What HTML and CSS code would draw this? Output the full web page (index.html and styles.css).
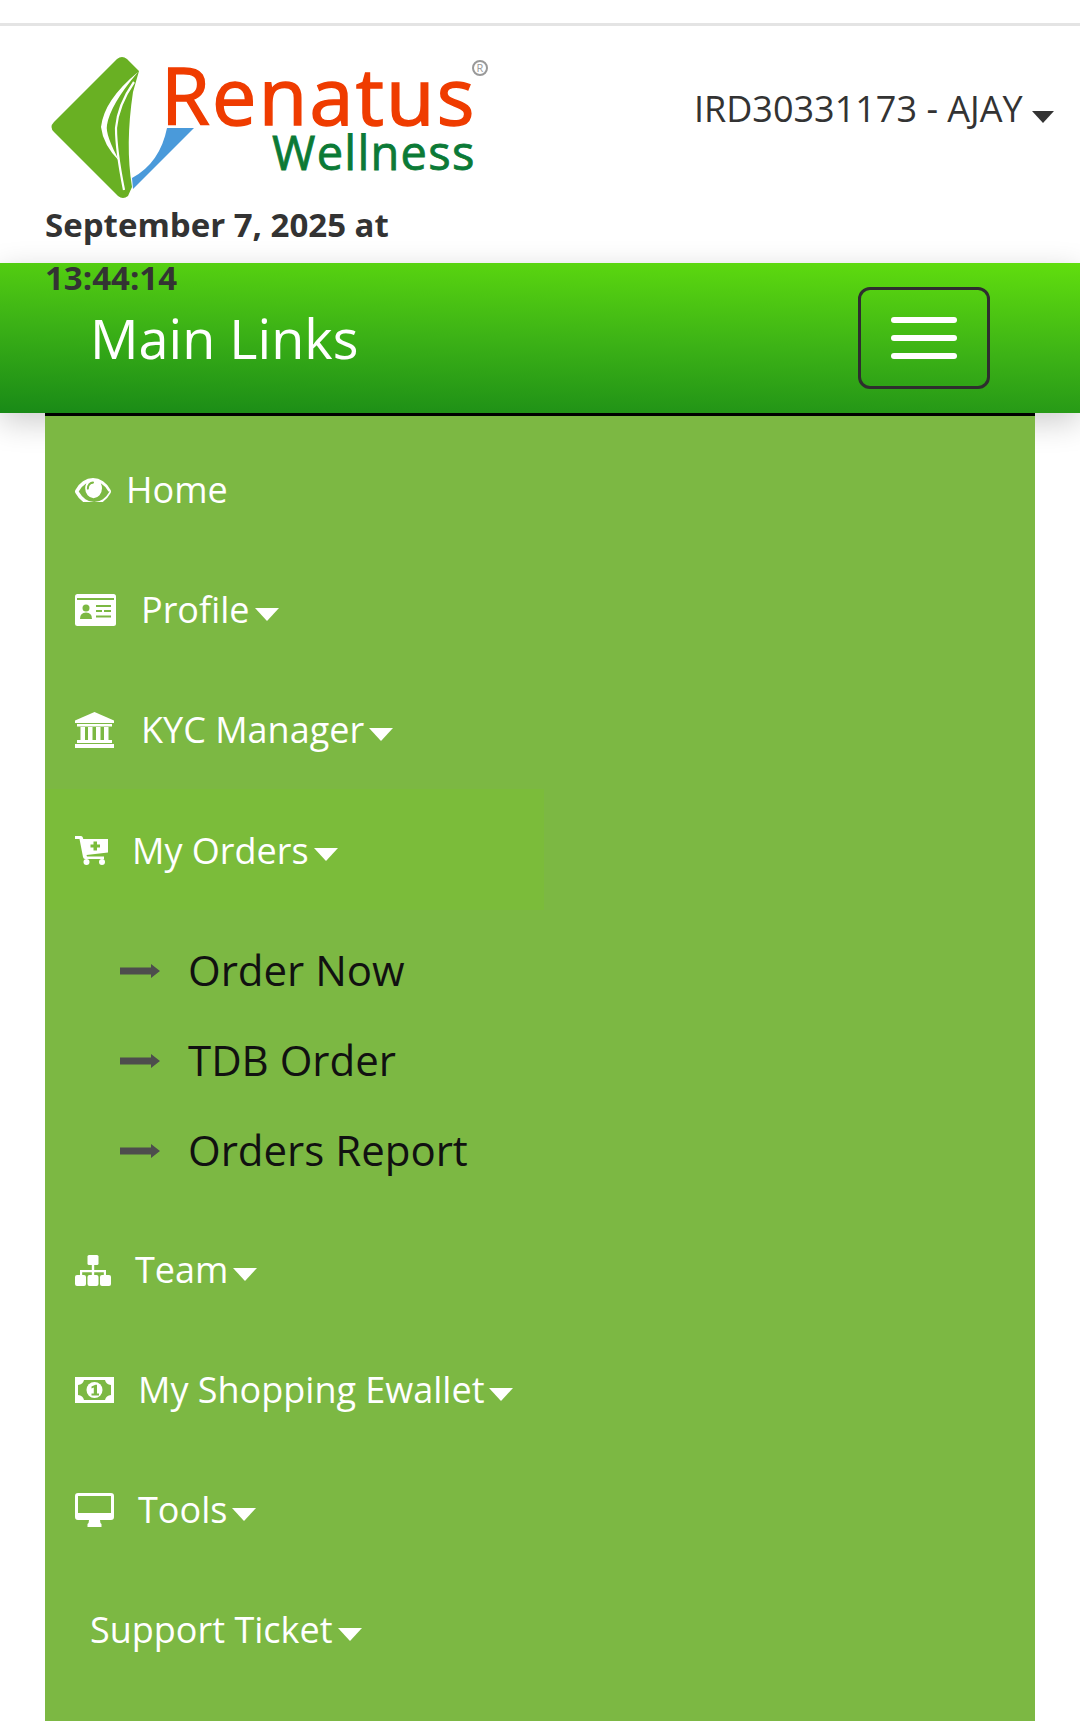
FILE: index.html
```html
<!DOCTYPE html>
<html lang="en">
<head>
<meta charset="utf-8">
<title>Renatus Wellness</title>
<link rel="stylesheet" href="styles.css">
</head>
<body>
<div class="topbar"></div>
<header class="header">
  <div class="brand">
    <svg class="logo" viewBox="45 53 445 150" aria-label="Renatus Wellness">
      <path class="leaf" d="M139 71 L127 59 Q122 55 117 59 L54 122 Q49 127 54 132 L118 196 Q123 200 128 196 L132 187 Q125 145 133 92 Z"/>
      <path class="cut" d="M138 72 Q104 100 101 127 Q103 145 120 162 Q105 135 107 125 Q110 105 138 72 Z"/>
      <path class="cut-line" d="M134 82 Q118 105 116 128 Q116 150 124 190"/>
      <path class="sea" d="M167 128 H194 L133 189 L132 178 Q160 163 167 128 Z"/>
      <text class="logo-r" x="161" y="125">Renatus</text>
      <text class="logo-w" x="272" y="170">Wellness</text>
      <circle class="reg" cx="480" cy="68" r="7"/>
      <text class="reg-t" x="480" y="72">R</text>
    </svg>
    <p class="date">September 7, 2025 at 13:44:14</p>
  </div>
  <div class="user">IRD30331173 - AJAY <span class="caret caret-dark"></span></div>
</header>
<nav class="navbar">
  <span class="nav-title">Main Links</span>
  <button class="toggle" type="button" aria-label="Toggle"><i></i><i></i><i></i></button>
</nav>
<main class="panel">
  <ul class="menu">
    <li><a class="item">
      <svg class="ico ico-eye" viewBox="0 384 1792 1024" preserveAspectRatio="none"><path d="M1664 960q-152-236-381-353 61 104 61 217 0 173-123 296t-296 123-296-123-123-296q0-113 61-217-229 117-381 353 133 205 333.5 326.500t434.500 121.500 434.500-121.500 333.500-326.500zm-720-384q0-20-14-34t-34-14q-125 0-214.500 89.500t-89.500 214.500q0 20 14 34t34 14 34-14 14-34q0-86 61-147t147-61q20 0 34-14t14-34zm848 384q0 34-20 69-140 230-376.500 368.500t-499.500 138.500-499.500-139-376.500-368q-20-35-20-69t20-69q140-229 376.500-368t499.500-139 499.500 139 376.500 368q20 35 20 69z"/></svg>
      <span>Home</span></a></li>
    <li><a class="item">
      <svg class="ico ico-card" viewBox="0 0 41 32"><rect width="41" height="32" rx="2.500"/><g class="hole"><rect x="2" y="4" width="37" height="2"/><circle cx="11" cy="14" r="3.500"/><path d="M5 25 Q5 18.500 11 18.500 Q17 18.500 17 25 Z"/><rect x="21" y="11" width="15" height="2"/><path d="M21 16 H27 V18 H21 Z M29 16 H36 V18 H29 Z"/><rect x="21" y="21.500" width="15" height="2"/></g></svg>
      <span>Profile</span><span class="caret"></span></a></li>
    <li><a class="item">
      <svg class="ico ico-bank" viewBox="0 0 39 36"><path d="M19.500 0 L39 8.500 V11 H0 V8.500 Z"/><rect x="2" y="12" width="35" height="2.500"/><rect x="5.500" y="15" width="4.500" height="13"/><rect x="13" y="15" width="4.500" height="13"/><rect x="21" y="15" width="4.500" height="13"/><rect x="29" y="15" width="4.500" height="13"/><rect x="2" y="28" width="35" height="3"/><rect y="32" width="39" height="4"/></svg>
      <span>KYC Manager</span><span class="caret"></span></a></li>
    <li><a class="item active">
      <svg class="ico ico-cart" viewBox="0 0 33 29"><path d="M0 0 H6 Q7.500 0 7.800 1.500 L8.300 3 H33 V16.500 L11.500 19 L12 20.500 H29 V23 H10 Q8.500 23 8 21 L4.500 3 H0 Z"/><circle cx="11.500" cy="26" r="3"/><circle cx="27" cy="26" r="3"/><path class="hole" d="M18.500 5.500 H22 V8.500 H25 V11.500 H22 V14.500 H18.500 V11.500 H15.500 V8.500 H18.500 Z"/></svg>
      <span>My Orders</span><span class="caret"></span></a></li>
  </ul>
  <ul class="submenu">
    <li><svg class="arrow" viewBox="0 0 40 14"><path d="M0 3.500 H31 V0 L40 7 L31 14 V10.500 H0 Z"/></svg><a>Order Now</a></li>
    <li><svg class="arrow" viewBox="0 0 40 14"><path d="M0 3.500 H31 V0 L40 7 L31 14 V10.500 H0 Z"/></svg><a>TDB Order</a></li>
    <li><svg class="arrow" viewBox="0 0 40 14"><path d="M0 3.500 H31 V0 L40 7 L31 14 V10.500 H0 Z"/></svg><a>Orders Report</a></li>
  </ul>
  <ul class="menu">
    <li><a class="item">
      <svg class="ico ico-site" viewBox="0 0 36 31"><rect x="12.500" width="11" height="10" rx="1.500"/><rect x="16.800" y="10" width="2.400" height="5"/><path d="M5 15 H31 V20 H28.800 V17.300 H19.200 V20 H16.800 V17.300 H7.200 V20 H5 Z"/><rect y="20" width="11" height="11" rx="2"/><rect x="12.500" y="20" width="11" height="11" rx="2"/><rect x="25" y="20" width="11" height="11" rx="2"/></svg>
      <span>Team</span><span class="caret"></span></a></li>
    <li><a class="item">
      <svg class="ico ico-money" viewBox="0 0 39 26"><rect width="39" height="26"/><path class="hole" d="M9 3 H30 Q31 7.500 36 8 V18 Q31 18.500 30 23 H9 Q8 18.500 3 18 V8 Q8 7.500 9 3 Z"/><circle cx="19.500" cy="13" r="8"/><path class="hole" d="M16.500 9.500 L20.500 7.800 H22 V16.500 H24 V18.500 H16.500 V16.500 H18.800 V10.500 L16.500 11.500 Z"/></svg>
      <span>My Shopping Ewallet</span><span class="caret"></span></a></li>
    <li><a class="item">
      <svg class="ico ico-desk" viewBox="0 0 39 34"><path fill-rule="evenodd" d="M3 0 H36 Q39 0 39 3 V24 Q39 27 36 27 H25 Q25 30 26.500 31 V34 H12.500 V31 Q14 30 14 27 H3 Q0 27 0 24 V3 Q0 0 3 0 Z M3 3 V20 H36 V3 Z"/></svg>
      <span>Tools</span><span class="caret"></span></a></li>
    <li><a class="item item-plain"><span>Support Ticket</span><span class="caret"></span></a></li>
  </ul>
</main>
</body>
</html>
```
FILE: styles.css
```css
* { box-sizing: border-box; }
html, body { margin: 0; height: 100%; }
body {
  display: flex;
  flex-direction: column;
  height: 1721px;
  overflow: hidden;
  background: #fff;
  font-family: "Open Sans", "Liberation Sans", sans-serif;
  color: #333;
}
ul { list-style: none; margin: 0; padding: 0; }

.topbar { flex: none; height: 26px; border-bottom: 3px solid #e4e4e4; }

.header {
  flex: none;
  height: 237px;
  padding: 27px 27px 0 45px;
  display: flex;
  justify-content: space-between;
  align-items: flex-start;
}
.brand { width: 400px; }
.logo { display: block; width: 445px; height: 150px; overflow: visible; }
.leaf { fill: #69b023; }
.sea { fill: #4a9ada; }
.cut { fill: #fff; }
.cut-line { fill: none; stroke: #fff; stroke-width: 2.200; }
.logo-r { font-family: "Open Sans", sans-serif; font-size: 79px; letter-spacing: 2.300px; fill: #ef3c00; stroke: #ef3c00; stroke-width: 1.500; }
.logo-w { font-family: "Open Sans", sans-serif; font-size: 47px; letter-spacing: 1.250px; fill: #0b7a36; stroke: #0b7a36; stroke-width: .8; }
.reg { fill: none; stroke: #999; stroke-width: 2; }
.reg-t { font-family: "Open Sans", sans-serif; font-size: 11px; text-anchor: middle; fill: #999; }
.date {
  position: relative;
  margin: -5px 0 0;
  font-size: 33px;
  font-weight: 700;
  line-height: 53px;
  color: #333;
}
.user { margin-top: 29px; margin-right: -1px; font-size: 36px; line-height: 54px; color: #333; white-space: nowrap; }

.caret {
  display: inline-block;
  width: 0;
  height: 0;
  margin-left: 5px;
  vertical-align: middle;
  border-top: 13px solid #fff;
  border-left: 12.500px solid transparent;
  border-right: 12.500px solid transparent;
}
.caret-dark { margin-left: 0; margin-top: 10px; border-top: 12px solid #333; border-left-width: 11.500px; border-right-width: 11.500px; }

.navbar {
  flex: none;
  height: 150px;
  padding: 0 90px 0 90px;
  display: flex;
  justify-content: space-between;
  align-items: center;
  background: linear-gradient(182deg, #61de0e 0%, #3db316 50%, #198a17 100%);
  box-shadow: 0 9px 30px rgba(0, 0, 0, .2);
}
.nav-title { font-size: 54px; line-height: 60px; color: #fff; }
.toggle {
  width: 132px;
  height: 102px;
  padding: 0;
  display: flex;
  flex-direction: column;
  align-items: center;
  justify-content: center;
  gap: 12px;
  background: transparent;
  border: 3px solid #2e2e2e;
  border-radius: 12px;
}
.toggle i { display: block; width: 66px; height: 6px; border-radius: 3px; background: #fff; }

.panel {
  flex: 1;
  margin: 0 45px;
  padding-top: 13px;
  background: #7cb843;
  border-top: 3px solid #000;
}
.item {
  display: flex;
  align-items: center;
  width: 499px;
  height: 120px;
  padding: 2px 0 0 30px;
  font-size: 36px;
  line-height: 60px;
  color: #fff;
  white-space: nowrap;
}
.item .caret { margin-top: 8px; }
.item.active { height: 121px; background: #7bbc3a; }
.item-plain { padding-left: 45px; }

.ico { flex: none; fill: #fff; display: block; }
.ico .hole, .hole { fill: #7cb843; }
.item.active .hole { fill: #7bbc3a; }
.ico-eye { width: 36px; height: 24px; margin-right: 15px; }
.ico-card { width: 41px; height: 32px; margin-right: 25px; }
.ico-bank { width: 39px; height: 36px; margin-right: 27px; }
.ico-cart { width: 33px; height: 29px; margin-right: 24px; }
.ico-site { width: 36px; height: 31px; margin-right: 24px; }
.ico-money { width: 39px; height: 26px; margin-right: 24px; }
.ico-desk { width: 39px; height: 34px; margin-right: 24px; }

.submenu { padding: 15px 0 14px 75px; }
.submenu li {
  display: flex;
  align-items: center;
  height: 90px;
  font-size: 42px;
  line-height: 60px;
  color: #111;
}
.arrow { width: 40px; height: 14px; flex: none; margin: 2px 28px 0 0; fill: #4d4d4d; }
```
